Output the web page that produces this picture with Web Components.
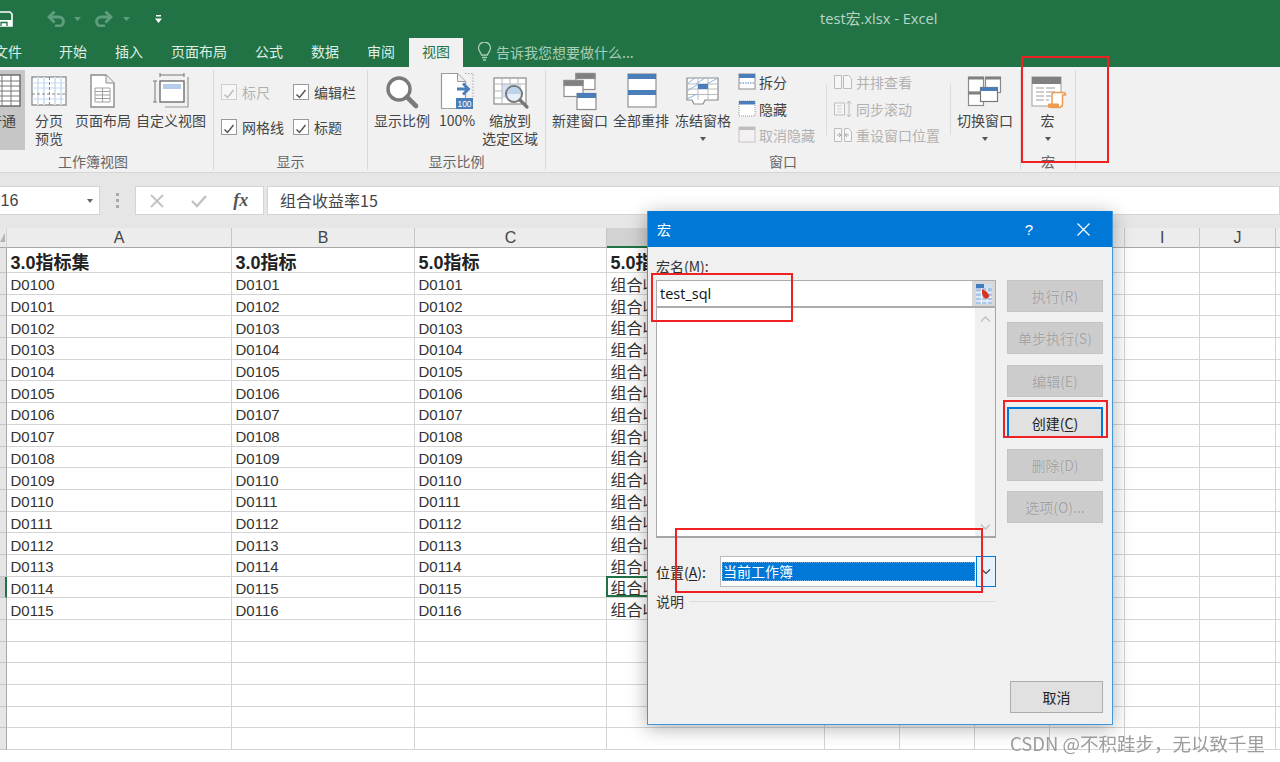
<!DOCTYPE html>
<html lang="zh">
<head>
<meta charset="utf-8">
<title>test宏.xlsx - Excel</title>
<style>
  html, body { margin: 0; padding: 0; background: #fff; }
  body { width: 1280px; height: 762px; overflow: hidden;
         font-family: "Noto Sans CJK SC", "Liberation Sans", sans-serif; }
  .page { width: 1280px; height: 762px; overflow: hidden; position: relative; display: flex; flex-direction: column; filter: blur(.35px); }
</style>
</head>
<body>
<div class="page">
  <excel-titlebar></excel-titlebar>

  <excel-ribbon>
    <ribbon-group label="工作簿视图" style="width:235px;margin-left:-21px;--shift:-3px">
      <big-button label="普通" style="width:46px;background:#c6c6c6">
        <svg viewBox="0 0 40 40" width="40" height="40"><rect x="2" y="4" width="36" height="31" fill="#fff" stroke="#666" stroke-width="1.4"/><path d="M2 10h36M2 15h36M2 20h36M2 25h36M2 30h36M11 4v31M20 4v31M29 4v31" stroke="#777" fill="none"/></svg>
      </big-button>
      <big-button label="分页<br>预览" style="width:48px">
        <svg viewBox="0 0 40 40" width="40" height="40"><rect x="3" y="6" width="34" height="28" fill="#fff" stroke="#8a8a8a" stroke-width="1.3"/><path d="M9 6v28M15 6v28M26 6v28M32 6v28" stroke="#d6e4f4" stroke-width="2" fill="none"/><path d="M3 12h34M3 17h34M3 28h34" stroke="#c6d9ef" fill="none"/><path d="M3 23h34M20.500 6v28" stroke="#888" stroke-dasharray="3 2" fill="none"/></svg>
      </big-button>
      <big-button label="页面布局" style="width:60px">
        <svg viewBox="0 0 40 40" width="40" height="40"><path d="M8 4h15l8 8v24H8z" fill="#fff" stroke="#8c8c8c" stroke-width="1.4"/><path d="M23 4v8h8" fill="#eee" stroke="#8c8c8c"/><path d="M12 17h15v14H12zM12 20.500h15M12 24h15M12 27.500h15M19.500 17v14" fill="none" stroke="#a0a0a0"/></svg>
      </big-button>
      <big-button label="自定义视图" style="width:76px">
        <svg viewBox="0 0 40 40" width="40" height="40"><path d="M9 4h24M9 2v4M33 2v4M4 10v21M2 10h4M2 31h4" stroke="#777" fill="none"/><path d="M37 6v30H14" stroke="#999" stroke-width="1.2" fill="none"/><rect x="9" y="10" width="24" height="21" fill="#fff" stroke="#666" stroke-width="1.3"/><rect x="12" y="13" width="18" height="5" fill="#b5cde8"/></svg>
      </big-button>
    </ribbon-group>

    <ribbon-group label="显示" style="width:154px">
      <div style="display:grid;grid-template-columns:72px 72px;grid-auto-rows:35px;padding:4px 0 0 7px">
        <check-item disabled>标尺</check-item>
        <check-item>编辑栏</check-item>
        <check-item>网格线</check-item>
        <check-item>标题</check-item>
      </div>
    </ribbon-group>

    <ribbon-group label="显示比例" style="width:178px">
      <div style="width:4px"></div>
      <big-button label="显示比例" style="width:60px">
        <svg viewBox="0 0 40 40" width="40" height="40"><circle cx="17" cy="18" r="11" fill="#fff" stroke="#7a7a7a" stroke-width="3.4"/><path d="M25 26l9 9" stroke="#7a7a7a" stroke-width="4.600" stroke-linecap="round"/></svg>
      </big-button>
      <big-button label="100%" style="width:50px">
        <svg viewBox="0 0 40 40" width="40" height="40"><path d="M4.500 2.500h16l8 8v27h-24z" fill="#fff" stroke="#9a9a9a" stroke-width="1.2"/><path d="M20.500 2.500v8h8" fill="#eee" stroke="#9a9a9a"/><path d="M28 2.500h8v25M4 37.500h15" fill="none" stroke="#aaa" stroke-dasharray="1.500 1.500"/><path d="M20 18h11M26 12.500l5.500 5.500-5.500 5.500" fill="none" stroke="#4a7ebb" stroke-width="2.800"/><rect x="19" y="27" width="17" height="11" fill="#4a7ebb"/><text x="27.500" y="35.800" font-size="8.500" fill="#fff" text-anchor="middle" font-family="Liberation Sans, sans-serif">100</text></svg>
      </big-button>
      <big-button label="缩放到<br>选定区域" style="width:56px">
        <svg viewBox="0 0 40 40" width="40" height="40"><rect x="4" y="7" width="32" height="26" fill="#fff" stroke="#8a8a8a" stroke-width="1.200"/><rect x="12" y="13" width="19" height="14" fill="#d3e2f3"/><path d="M4 13h32M4 20h8M4 27h8M12 7v26M20 7v6M28 7v6" stroke="#b5b5b5" fill="none"/><circle cx="24" cy="23" r="8" fill="#e6eef8" stroke="#777" stroke-width="2"/><path d="M24 16a7 7 0 0 0 -7 7h14a7 7 0 0 0 -7-7z" fill="#bcd3ec"/><path d="M30 29l7 7" stroke="#777" stroke-width="3.200" stroke-linecap="round"/></svg>
      </big-button>
    </ribbon-group>

    <ribbon-group label="窗口" style="width:475px">
      <div style="width:4px"></div>
      <big-button label="新建窗口" style="width:60px">
        <svg viewBox="0 0 40 40" width="40" height="40"><g stroke="#8c8c8c" stroke-width="1.200"><rect x="16" y="2.500" width="19" height="16" fill="#fff"/><rect x="16" y="2.500" width="19" height="5" fill="#808080"/><rect x="4" y="9.500" width="19" height="16" fill="#fff"/><rect x="4" y="9.500" width="19" height="5" fill="#808080"/><rect x="17" y="22.500" width="19" height="16" fill="#fff"/></g><rect x="17" y="22" width="19" height="5" fill="#4a7ebb"/></svg>
      </big-button>
      <big-button label="全部重排" style="width:62px">
        <svg viewBox="0 0 40 40" width="40" height="40"><rect x="7" y="3" width="28" height="33" fill="#fff" stroke="#9a9a9a" stroke-width="1.300"/><rect x="7" y="3" width="28" height="5" fill="#4a7ebb"/><rect x="7" y="19" width="28" height="5" fill="#4a7ebb"/></svg>
      </big-button>
      <big-button label="冻结窗格" arrow style="width:62px">
        <svg viewBox="0 0 40 40" width="40" height="40"><path d="M4 7h31v22H22l-2 4h-9l-2-4H4z" fill="#fff" stroke="#8c8c8c" stroke-width="1.200"/><path d="M4 13h31M4 18h31M4 23.500h31M15 7v22M25 7v22" stroke="#b9b9b9" fill="none"/><rect x="15" y="13" width="10" height="5" fill="#4a7ebb"/><path d="M4 13l8-6M13 13l9-6M24 13l11-6M4 20l10-6M4 28l10-5" stroke="#8fb4dc" fill="none"/></svg>
      </big-button>
      <div style="width:92px;padding-left:4px;box-sizing:border-box;margin-top:-1px">
        <small-button>
          <svg slot="icon" viewBox="0 0 18 18" width="18" height="18"><rect x="1" y="1" width="16" height="15" fill="#fff" stroke="#8c8c8c"/><rect x="1" y="1" width="16" height="4" fill="#4a7ebb"/><path d="M2 10h14" stroke="#4a7ebb" stroke-dasharray="1.500 1"/></svg>
          拆分
        </small-button>
        <small-button>
          <svg slot="icon" viewBox="0 0 18 18" width="18" height="18"><rect x="1" y="1" width="16" height="15" fill="#fff" stroke="#999" stroke-dasharray="1 1"/><rect x="1" y="1" width="16" height="3.500" fill="#4a7ebb"/></svg>
          隐藏
        </small-button>
        <small-button disabled>
          <svg slot="icon" viewBox="0 0 18 18" width="18" height="18"><rect x="1" y="1" width="16" height="15" fill="#f4f0f4" stroke="#c4c4c4"/><rect x="1" y="1" width="16" height="3" fill="#bdbdbd"/></svg>
          取消隐藏
        </small-button>
      </div>
      <ribbon-sep></ribbon-sep>
      <div style="width:123px;padding-left:6px;box-sizing:border-box;margin-top:-1px">
        <small-button disabled>
          <svg slot="icon" viewBox="0 0 20 18" width="20" height="18"><path d="M1.500 2.500h7v13h-7zM10.500 2.500h5l3 3v10h-8z" fill="#f6f6f6" stroke="#bcbcbc"/></svg>
          并排查看
        </small-button>
        <small-button disabled>
          <svg slot="icon" viewBox="0 0 20 18" width="20" height="18"><path d="M1.500 3h10v12h-10z" fill="#f6f6f6" stroke="#bcbcbc"/><path d="M4 6h5M4 9h5M4 12h5" stroke="#cfcfcf"/><path d="M16 1v16M14 3.500l2-2.500 2 2.500M14 14.500l2 2.500 2-2.500" fill="none" stroke="#bcbcbc"/></svg>
          同步滚动
        </small-button>
        <small-button disabled>
          <svg slot="icon" viewBox="0 0 20 18" width="20" height="18"><path d="M1.500 2.500h7v13h-7zM11.500 2.500h4l3 3v10h-7z" fill="#f6f6f6" stroke="#bcbcbc"/><path d="M4 9h4M6 7l2 2-2 2M16 9h-4M14 7l-2 2 2 2" fill="none" stroke="#aaa"/></svg>
          重设窗口位置
        </small-button>
      </div>
      <ribbon-sep></ribbon-sep>
      <big-button label="切换窗口" arrow style="width:68px">
        <svg viewBox="0 0 40 40" width="40" height="40"><g stroke="#8c8c8c" stroke-width="1.200" fill="#fff"><rect x="3.500" y="6.500" width="15" height="15"/><rect x="20.500" y="6.500" width="15" height="15"/><rect x="3.500" y="21.500" width="15" height="13"/></g><path d="M3 7h16M20 7h16M3 22h16" stroke="#808080" stroke-width="3"/><rect x="15.500" y="16.500" width="17" height="14" fill="#fff" stroke="#777" stroke-width="1.200"/><rect x="15.500" y="16.500" width="17" height="3.500" fill="#4a7ebb"/></svg>
      </big-button>
    </ribbon-group>

    <ribbon-group label="宏" style="width:55px">
      <big-button label="宏" arrow style="width:53px">
        <svg viewBox="0 0 40 40" width="40" height="40"><rect x="4" y="6" width="29" height="29" fill="#fff" stroke="#a0a0a0"/><rect x="4" y="6" width="29" height="7" fill="#808080"/><path d="M8 17h8M18 17h9M8 21h8M18 21h9M8 25h8M18 25h5M8 29h8M18 29h3" stroke="#bdbdbd" stroke-width="1.500"/><path d="M26 21.500h9.500q2 0 2 2.500h-3v9q0 3-3 3.500H24V24q0-2.500 2-2.500z" fill="#fff" stroke="#ed9b4f" stroke-width="1.500"/><rect x="20" y="32.500" width="11" height="4.500" rx="1" fill="#ed9b4f"/></svg>
      </big-button>
    </ribbon-group>
  </excel-ribbon>

  <formula-bar name="D16" value="组合收益率15"></formula-bar>
  <excel-sheet></excel-sheet>

  <macro-dialog></macro-dialog>

  <red-box style="left:1021px;top:56px;width:88px;height:107px"></red-box>
  <red-box style="left:651px;top:273px;width:142px;height:49px"></red-box>
  <red-box style="left:1003px;top:400px;width:105px;height:38px"></red-box>
  <red-box style="left:675px;top:528px;width:308px;height:65px"></red-box>
  <water-mark>CSDN @不积跬步，无以致千里</water-mark>
</div>

<script>
const UI_FONT = '"Noto Sans CJK SC", "Liberation Sans", sans-serif';

class ExcelTitlebar extends HTMLElement {
  constructor() {
    super();
    this.attachShadow({mode: "open"}).innerHTML = `
      <style>
        :host { display: block; background: #217346; color: #fff; font-family: ${UI_FONT}; flex: none; }
        .top { height: 38px; display: flex; align-items: center; }
        .quick { display: flex; align-items: center; margin-left: -4px; width: 824px; flex: none; }
        .title { font-size: 14.700px; color: #b9d6c6; white-space: nowrap; font-family: "Open Sans", ${UI_FONT}; padding-bottom: 4px; }
        .tabs { height: 29px; display: flex; margin-left: -20px; font-size: 14px; }
        .tab { padding: 0 14px; line-height: 27px; color: #dfeee6; white-space: nowrap; }
        .tab.file { padding: 0 23px 0 14px; }
        .tab.on { background: #f1f1f1; color: #217346; padding: 0 13px; }
        .tell { display: flex; align-items: center; margin-left: 14px; gap: 4px; color: #a9cdb9; font-size: 14px; padding-bottom: 2px; }
      </style>
      <div class="top">
        <div class="quick">
          <svg width="17" height="16" viewBox="0 0 17 16"><path d="M1 1h13l2 2v12H1z" fill="none" stroke="#fff" stroke-width="1.600"/><path d="M1 9h15v6H1z" fill="#fff"/><path d="M5 15v-3.500h6V15" fill="none" stroke="#217346" stroke-width="1.300"/></svg>
          <svg style="margin-left:34px" width="18" height="16" viewBox="0 0 18 16"><path d="M2.500 6H12a4.500 4.500 0 0 1 0 9H8" fill="none" stroke="#5f9e7c" stroke-width="2.800"/><path d="M7.500 .5L2 6l5.500 5.500" fill="none" stroke="#5f9e7c" stroke-width="2.800"/></svg>
          <svg style="margin-left:9px" width="7" height="4"><path d="M0 0h7L3.500 4z" fill="#5f9e7c"/></svg>
          <svg style="margin-left:14px" width="18" height="16" viewBox="0 0 18 16"><path d="M15.500 6H6a4.500 4.500 0 0 0 0 9h4" fill="none" stroke="#5f9e7c" stroke-width="2.800"/><path d="M10.500 .5L16 6l-5.500 5.500" fill="none" stroke="#5f9e7c" stroke-width="2.800"/></svg>
          <svg style="margin-left:10px" width="7" height="4"><path d="M0 0h7L3.500 4z" fill="#5f9e7c"/></svg>
          <svg style="margin-left:25px" width="7" height="8"><path d="M1 0h5v1.500H1zM0 3.500h7L3.500 8z" fill="#fff"/></svg>
        </div>
        <div class="title">test宏.xlsx - Excel</div>
      </div>
      <div class="tabs">
        <div class="tab file">文件</div>
        <div class="tab">开始</div>
        <div class="tab">插入</div>
        <div class="tab">页面布局</div>
        <div class="tab">公式</div>
        <div class="tab">数据</div>
        <div class="tab">审阅</div>
        <div class="tab on">视图</div>
        <div class="tell">
          <svg width="15" height="20" viewBox="0 0 15 20"><path d="M4.500 13c0-2-3-3.500-3-7a6 6 0 0 1 12 0c0 3.500-3 5-3 7zM5 15.500h5M6 18h3" fill="none" stroke="#a9cdb9" stroke-width="1.300"/></svg>
          <span>告诉我您想要做什么...</span>
        </div>
      </div>`;
  }
}

class ExcelRibbon extends HTMLElement {
  constructor() {
    super();
    this.attachShadow({mode: "open"}).innerHTML = `
      <style>
        :host { display: flex; flex: none; height: 106px; box-sizing: border-box; padding-top: 3px;
                background: #f1f1f1; border-bottom: 1px solid #d6d6d6; font-family: ${UI_FONT}; }
      </style>
      <slot></slot>`;
  }
}

class RibbonGroup extends HTMLElement {
  constructor() {
    super();
    this.attachShadow({mode: "open"}).innerHTML = `
      <style>
        :host { display: flex; flex-direction: column; flex: none; box-sizing: border-box; height: 100px;
                border-right: 1px solid #d9d9d9; }
        .body { display: flex; height: 82px; }
        .label { height: 18px; line-height: 18px; text-align: center; font-size: 14px; color: #666;
                 transform: translateX(var(--shift, 0)); }
      </style>
      <div class="body"><slot></slot></div>
      <div class="label"></div>`;
  }
  connectedCallback() {
    this.shadowRoot.querySelector(".label").textContent = this.getAttribute("label");
  }
}

class BigButton extends HTMLElement {
  constructor() {
    super();
    this.attachShadow({mode: "open"}).innerHTML = `
      <style>
        :host { display: flex; flex-direction: column; align-items: center; flex: none; height: 80px; }
        .icon { height: 41px; padding-top: 1px; box-sizing: border-box; display: flex; justify-content: center; }
        .text { font-size: 14px; line-height: 18px; color: #444; text-align: center; white-space: nowrap; }
        .arrow { margin-top: 8px; width: 0; height: 0; border: 3.5px solid transparent; border-top: 4px solid #555; border-bottom: 0; }
      </style>
      <div class="icon"><slot></slot></div>
      <div class="text"></div>
      <div class="arrow"></div>`;
  }
  connectedCallback() {
    this.shadowRoot.querySelector(".text").innerHTML = this.getAttribute("label");
    if (!this.hasAttribute("arrow")) this.shadowRoot.querySelector(".arrow").style.display = "none";
  }
}

class CheckItem extends HTMLElement {
  constructor() {
    super();
    this.attachShadow({mode: "open"}).innerHTML = `
      <style>
        :host { display: flex; align-items: center; gap: 5px; font-size: 14px; color: #444; white-space: nowrap; }
        :host([disabled]) { color: #b1b1b1; }
        .box { width: 14px; height: 14px; border: 1px solid #999; background: #fff; flex: none; }
        :host([disabled]) .box { border-color: #cfcfcf; background: #f6f6f6; }
        path { stroke: #555; }
        :host([disabled]) path { stroke: #bdbdbd; }
      </style>
      <div class="box"><svg width="14" height="14" viewBox="0 0 14 14"><path d="M2.500 7.500l3 3 6-7.500" fill="none" stroke-width="1.500"/></svg></div>
      <slot></slot>`;
  }
}

class SmallButton extends HTMLElement {
  constructor() {
    super();
    this.attachShadow({mode: "open"}).innerHTML = `
      <style>
        :host { display: flex; align-items: center; gap: 3px; height: 26.5px; font-size: 14px; color: #444; white-space: nowrap; }
        :host([disabled]) { color: #b1b1b1; }
        ::slotted(svg) { flex: none; }
      </style>
      <slot name="icon"></slot><slot></slot>`;
  }
}

class RibbonSep extends HTMLElement {
  constructor() {
    super();
    this.attachShadow({mode: "open"}).innerHTML = `
      <style>:host { display: block; flex: none; width: 1px; height: 51px; margin-top: 14px; background: #dcdcdc; }</style>`;
  }
}

class FormulaBar extends HTMLElement {
  constructor() {
    super();
    this.attachShadow({mode: "open"}).innerHTML = `
      <style>
        :host { display: flex; flex: none; height: 55px; box-sizing: border-box; padding: 13px 0;
                background: #e6e6e6; color: #444; font: 16px ${UI_FONT}; }
        .name, .tools, .input { height: 29px; background: #fff; border: 1px solid #d4d4d4; box-sizing: border-box; display: flex; align-items: center; }
        .name { width: 120px; margin-left: -20px; padding-left: 8px; flex: none; justify-content: space-between; padding-right: 6px; font-family: "Liberation Sans", sans-serif; }
        .caret { width: 0; height: 0; border: 3.5px solid transparent; border-top: 4px solid #666; border-bottom: 0; }
        .dots { width: 35px; flex: none; display: flex; flex-direction: column; align-items: center; justify-content: center; gap: 3px; }
        .dots i { width: 3px; height: 3px; background: #aaa; display: block; }
        .tools { width: 129px; flex: none; justify-content: space-around; padding: 0 2px 0 0; }
        .fx { font: italic bold 18px "Liberation Serif", serif; color: #555; }
        .input { flex: 1; margin: 0 0 0 3px; padding: 0 0 2px 12px; }
      </style>
      <div class="name"><span class="n"></span><div class="caret"></div></div>
      <div class="dots"><i></i><i></i><i></i></div>
      <div class="tools">
        <svg width="16" height="16" viewBox="0 0 16 16"><path d="M2 2l12 12M14 2L2 14" stroke="#c2c2c2" stroke-width="1.800"/></svg>
        <svg width="18" height="16" viewBox="0 0 18 16"><path d="M2 8l5 5 9-10" fill="none" stroke="#c2c2c2" stroke-width="2.400"/></svg>
        <span class="fx">fx</span>
      </div>
      <div class="input"><span class="v"></span></div>`;
  }
  connectedCallback() {
    this.shadowRoot.querySelector(".n").textContent = this.getAttribute("name");
    this.shadowRoot.querySelector(".v").textContent = this.getAttribute("value");
  }
}

class ExcelSheet extends HTMLElement {
  constructor() {
    super();
    const colNames = ["A", "B", "C", "D", "E", "F", "G", "H", "I", "J", "K"];
    let html = `<div class="c corner"><svg width="6" height="9" viewBox="0 0 6 9"><path d="M5 0v9H0z" fill="#b4b4b4"/></svg></div>`;
    colNames.forEach(n => { html += `<div class="c ch${n === "D" ? " sel" : ""}">${n}</div>`; });

    const code = i => "D" + String(100 + i).padStart(4, "0");
    // column D is mostly under the dialog, only its visible start is written
    const heads = ["3.0指标集", "3.0指标", "5.0指标", "5.0指"];
    html += `<div class="c rh"></div>`;
    colNames.forEach((n, j) => { html += `<div class="c head">${heads[j] || ""}</div>`; });
    for (let r = 0; r < 22; r++) {
      const has = r < 16;
      html += `<div class="c rh${r === 14 ? " sel" : ""}"></div>`;
      colNames.forEach((n, j) => {
        let txt = "";
        if (has && j === 0) txt = code(r);
        if (has && (j === 1 || j === 2)) txt = code(r + 1);
        if (has && j === 3) txt = "组合收";
        html += `<div class="c${r === 14 && j === 3 ? " active" : ""}${j === 3 ? " cjk" : ""}">${txt}</div>`;
      });
    }
    this.attachShadow({mode: "open"}).innerHTML = `
      <style>
        :host { display: block; flex: none; overflow: hidden; background: #fff; }
        .grid { display: grid; grid-template-columns: 7px 225px 183px 192px 217.5px repeat(6, 75.2px) 30px;
                grid-template-rows: 20px 25px; grid-auto-rows: 21.7px; }
        .c { box-sizing: border-box; border-right: 1px solid #d4d4d4; border-bottom: 1px solid #d4d4d4; padding: 3px 0 0 3.500px;
             font: 15px "Liberation Sans", "Noto Sans CJK SC", sans-serif; color: #333; white-space: nowrap; overflow: hidden;
             display: flex; align-items: center; }
        .cjk { font-size: 16px; padding-top: 1px; }
        .corner { background: #e9e9e9; padding: 0; border-bottom-color: #a8a8a8; }
        .ch { background: #ececec; justify-content: center; padding: 0; color: #444; border-right-color: #c6c6c6; border-bottom-color: #a8a8a8; font-size: 16px; }
        .ch.sel { background: #d2d2d2; border-bottom: 2px solid #217346; }
        .rh { background: #e6e6e6; padding: 0; border-right-color: #a8a8a8; border-bottom-color: #c6c6c6; }
        .rh.sel { background: #d2d2d2; border-right: 2px solid #217346; }
        .head { font: bold 18px "Liberation Sans", "Noto Sans CJK SC", sans-serif; color: #222; padding-top: 1px; }
        .active { box-shadow: inset 0 0 0 2px #217346; margin: -1px 0 0 -1px; padding-left: 4.500px; }
      </style>
      <div class="grid">${html}</div>`;
  }
}

class DialogButton extends HTMLElement {
  constructor() {
    super();
    this.attachShadow({mode: "open"}).innerHTML = `
      <style>
        :host { display: flex; align-items: center; justify-content: center; box-sizing: border-box; height: 32px;
                background: #e1e1e1; border: 1px solid #adadad; font-size: 14px; color: #222; white-space: nowrap; }
        :host([disabled]) { background: #cccccc; border-color: #c4c4c4; color: #a3a3a3; text-shadow: 0 0 1px #e8e8e8; }
        :host([default]) { border: 2px solid #0078d7; height: 31px; }
      </style>
      <slot></slot>`;
  }
}

class MacroDialog extends HTMLElement {
  constructor() {
    super();
    this.attachShadow({mode: "open"}).innerHTML = `
      <style>
        :host { position: absolute; left: 647px; top: 211px; width: 466px; height: 514px; box-sizing: border-box;
                display: flex; flex-direction: column; background: #f0f0f0; border: 1px solid #3f97dd; border-top: 0;
                box-shadow: 0 3px 18px rgba(0,0,0,.32); font: 14px ${UI_FONT}; color: #333; }
        .bar { height: 36px; flex: none; background: #0078d7; color: #fff; display: flex; align-items: center; padding-left: 9px; }
        .bar .t { flex: 1; }
        .bar .q { width: 20px; font-size: 15px; text-align: center; font-family: "Liberation Sans", sans-serif; }
        .bar svg { margin: 0 22px 0 38px; }
        .body { flex: 1; display: flex; padding: 0 9px 11px 8px; gap: 11px; min-height: 0; }
        .left { width: 340px; flex: none; }
        .lab { height: 20px; line-height: 20px; margin: 9px 0 4px; }
        .input { height: 28px; box-sizing: border-box; display: flex; background: #fff; border: 1px solid #acacac; border-bottom-width: 2px; }
        .input .val { flex: 1; padding-left: 3px; font: 14.5px/25px "Open Sans", sans-serif; color: #111; }
        .pick { width: 23px; background: #d8d8d8; display: flex; align-items: center; justify-content: center; }
        .list { height: 230px; box-sizing: border-box; background: #fff; display: flex; justify-content: flex-end;
                border: 1px solid #a5a5a5; border-top: 0; border-bottom-width: 2px; border-left-color: #acacac; }
        .scroll { width: 20px; background: #f0f0f0; display: flex; flex-direction: column; align-items: center; justify-content: space-between; padding: 8px 0 6px; box-sizing: border-box; }
        .pos { display: flex; align-items: center; margin-top: 18px; height: 31px; color: #222; }
        .pos .pl { width: 64px; flex: none; }
        .combo { flex: 1; height: 31px; box-sizing: border-box; display: flex; background: #fff; border: 1px solid #bcbcbc; }
        .sel { flex: 1; margin: 5px 1px; background: #0078d7; color: #fff; border: 1px dotted #6aa6d8; line-height: 17px; }
        .drop { width: 20px; flex: none; box-sizing: border-box; background: #e5f1fb; border: 1px solid #0078d7; display: flex; align-items: center; justify-content: center; margin: -1px -1px -1px 0; }
        .desc { display: flex; align-items: center; gap: 5px; height: 16px; margin-top: 6px; }
        .desc i { flex: 1; height: 1px; background: #dcdcdc; }
        .right { flex: 1; display: flex; flex-direction: column; gap: 10.4px; padding-top: 33px; }
        .cancel { margin-top: auto; margin-left: 3px; }
        u { text-underline-offset: 2px; }
      </style>
      <div class="bar">
        <span class="t">宏</span>
        <span class="q">?</span>
        <svg width="13" height="13" viewBox="0 0 13 13"><path d="M.5.5l12 12M12.500.5l-12 12" stroke="#fff" stroke-width="1.200"/></svg>
      </div>
      <div class="body">
        <div class="left">
          <div class="lab">宏名(<u>M</u>):</div>
          <div class="input">
            <div class="val">test_sql</div>
            <div class="pick"><svg width="16" height="20" viewBox="0 0 16 20"><rect width="16" height="20" fill="#a9c6e8"/><path d="M0 2h8" stroke="#3f7cc0" stroke-width="4"/><path d="M8 2h8" stroke="#cfdff2" stroke-width="4"/><path d="M0 8.500h16M0 13h16M0 17h16M5.500 4v16M11 4v16" stroke="#eef4fb" stroke-width="1.300"/><path d="M6 5l5 3 2.500 4-2.500 3-3.500-1.500-1.500-4z" fill="#d8341f"/></svg></div>
          </div>
          <div class="list">
            <div class="scroll">
              <svg width="11" height="6" viewBox="0 0 11 6"><path d="M1 5.500l4.500-4.500 4.500 4.500" fill="none" stroke="#c4c4c4" stroke-width="1.500"/></svg>
              <svg width="11" height="6" viewBox="0 0 11 6"><path d="M1 .5l4.500 4.500 4.500-4.500" fill="none" stroke="#c4c4c4" stroke-width="1.500"/></svg>
            </div>
          </div>
          <div class="pos">
            <span class="pl">位置(<u>A</u>):</span>
            <div class="combo">
              <div class="sel">当前工作簿</div>
              <div class="drop"><svg width="10" height="6" viewBox="0 0 10 6"><path d="M1 .5l4 4 4-4" fill="none" stroke="#444" stroke-width="1.200"/></svg></div>
            </div>
          </div>
          <div class="desc"><span>说明</span><i></i></div>
        </div>
        <div class="right">
          <dialog-button disabled>执行(R)</dialog-button>
          <dialog-button disabled>单步执行(S)</dialog-button>
          <dialog-button disabled>编辑(E)</dialog-button>
          <dialog-button default>创建(<u>C</u>)</dialog-button>
          <dialog-button disabled>删除(D)</dialog-button>
          <dialog-button disabled>选项(O)...</dialog-button>
          <dialog-button class="cancel">取消</dialog-button>
        </div>
      </div>`;
  }
}

class RedBox extends HTMLElement {
  constructor() {
    super();
    this.attachShadow({mode: "open"}).innerHTML = `
      <style>:host { position: absolute; box-sizing: border-box; border: 2px solid #ee2222; pointer-events: none; }</style>`;
  }
}

class WaterMark extends HTMLElement {
  constructor() {
    super();
    this.attachShadow({mode: "open"}).innerHTML = `
      <style>
        :host { position: absolute; right: 15px; top: 731px; font: 18.500px/24px ${UI_FONT}; color: #9c9c9c; white-space: nowrap; }
      </style>
      <slot></slot>`;
  }
}

customElements.define("excel-titlebar", ExcelTitlebar);
customElements.define("excel-ribbon", ExcelRibbon);
customElements.define("ribbon-group", RibbonGroup);
customElements.define("big-button", BigButton);
customElements.define("check-item", CheckItem);
customElements.define("small-button", SmallButton);
customElements.define("ribbon-sep", RibbonSep);
customElements.define("formula-bar", FormulaBar);
customElements.define("excel-sheet", ExcelSheet);
customElements.define("dialog-button", DialogButton);
customElements.define("macro-dialog", MacroDialog);
customElements.define("red-box", RedBox);
customElements.define("water-mark", WaterMark);
</script>
</body>
</html>
